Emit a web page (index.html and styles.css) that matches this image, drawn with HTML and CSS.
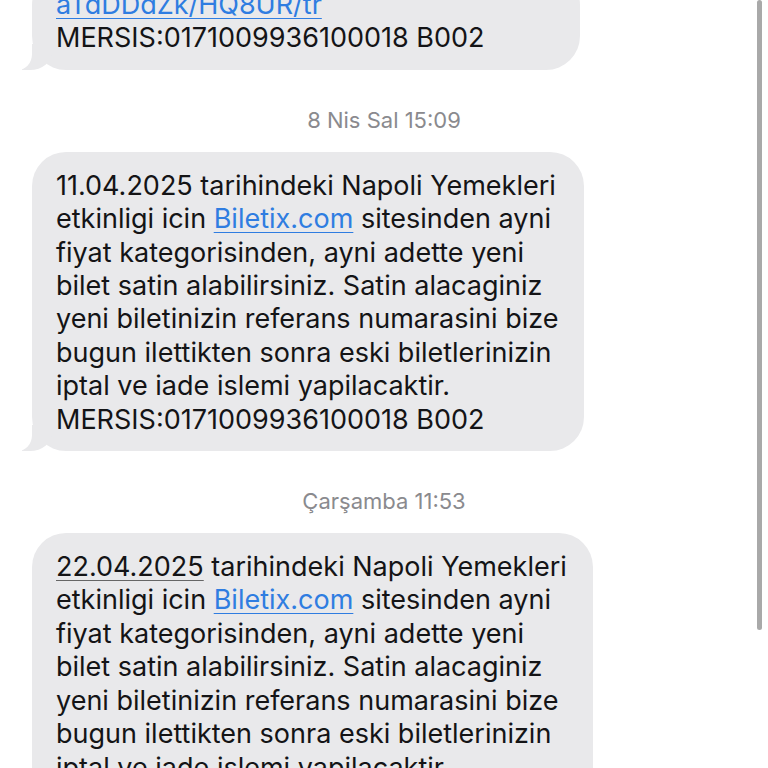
FILE: index.html
```html
<!DOCTYPE html>
<html>
<head>
  <title>Mesajlar</title>
  <link rel="stylesheet" href="styles.css">
</head>
<body>
  <div class="thread">
    <div class="bubble first">
      <a href="#">aTdDDdZk/HQ8UR/tr</a><br>
      MERSIS:0171009936100018 B002
    </div>

    <div class="stamp">8 Nis Sal 15:09</div>
    <div class="bubble">
      11.04.2025 tarihindeki Napoli Yemekleri<br>
      etkinligi icin <a href="#">Biletix.com</a> sitesinden ayni<br>
      fiyat kategorisinden, ayni adette yeni<br>
      bilet satin alabilirsiniz. Satin alacaginiz<br>
      yeni biletinizin referans numarasini bize<br>
      bugun ilettikten sonra eski biletlerinizin<br>
      iptal ve iade islemi yapilacaktir.<br>
      MERSIS:0171009936100018 B002
    </div>

    <div class="stamp">Çarşamba 11:53</div>
    <div class="bubble">
      <span class="date">22.04.2025</span> tarihindeki Napoli Yemekleri<br>
      etkinligi icin <a href="#">Biletix.com</a> sitesinden ayni<br>
      fiyat kategorisinden, ayni adette yeni<br>
      bilet satin alabilirsiniz. Satin alacaginiz<br>
      yeni biletinizin referans numarasini bize<br>
      bugun ilettikten sonra eski biletlerinizin<br>
      iptal ve iade islemi yapilacaktir.<br>
      MERSIS:0171009936100018 B002
    </div>
  </div>

  <div class="scrollbar"></div>
</body>
</html>
```

FILE: styles.css
```css
body {
  margin: 0;
  background-color: #fff;
  font-family: Inter, "Liberation Sans", sans-serif;
  overflow: hidden;
}
.thread {
  display: flex;
  flex-direction: column;
  align-items: flex-start;
  padding-left: 32px;
  margin-top: -29px;
}
.bubble {
  position: relative;
  background-color: #e9e9eb;
  color: #141416;
  font-size: 27px;
  line-height: 33.4px;
  padding: 17px 26px 15px 24px;
  border-radius: 34px;
  white-space: nowrap;
}
.bubble.first {
  width: 498px;
}
.bubble::before {
  content: "";
  position: absolute;
  bottom: 0;
  left: -10px;
  width: 30px;
  height: 26px;
  background-color: #e9e9eb;
  border-bottom-right-radius: 22px 18px;
}
.bubble::after {
  content: "";
  position: absolute;
  bottom: 0;
  left: -16px;
  width: 16px;
  height: 26px;
  background-color: #fff;
  border-bottom-right-radius: 14px 16px;
}
.bubble a {
  color: #2f7de1;
  text-decoration: underline;
  text-decoration-thickness: 1px;
  text-underline-offset: 4px;
}
.bubble .date {
  text-decoration: underline;
  text-decoration-color: #666;
  text-decoration-thickness: 1px;
  text-underline-offset: 4px;
}
.stamp {
  align-self: stretch;
  text-align: center;
  color: #8a8a8e;
  font-size: 22px;
  line-height: 26px;
  margin: 37px 0 19px;
  padding-right: 32px;
}
.scrollbar {
  position: absolute;
  top: 0;
  right: 6px;
  width: 5px;
  height: 630px;
  background-color: #a9a9a9;
  border-radius: 3px;
}
```
